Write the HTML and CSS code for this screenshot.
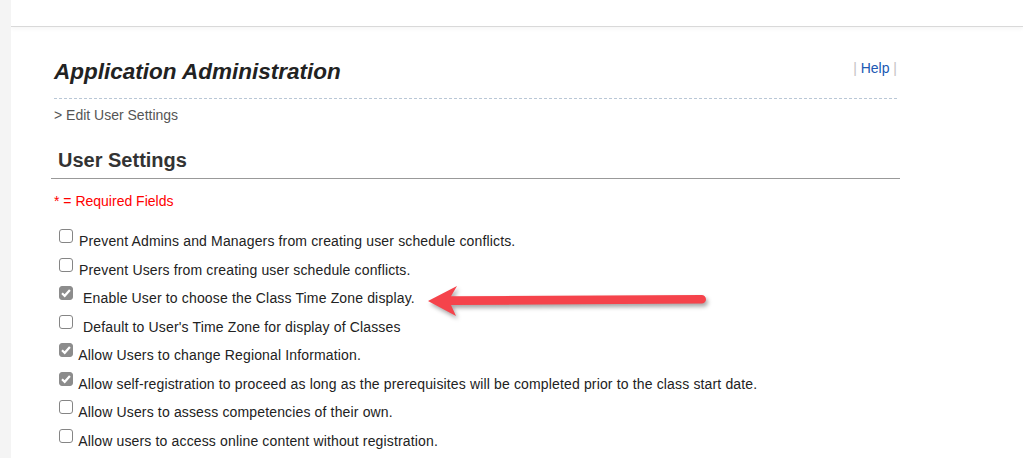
FILE: index.html
```html
<!DOCTYPE html>
<html lang="en">
<head>
  <meta charset="UTF-8" />
  <meta name="viewport" content="width=device-width, initial-scale=1.0" />
  <title>Application Administration - User Settings</title>
  <link rel="stylesheet" href="styles.css">
</head>
<body>
  <div class="page">
    <div class="topbar"></div>

    <div class="main">
      <div class="admin-head">
        <h1>Application Administration</h1>
        <div class="help"><span class="pipe">|</span> <a href="#">Help</a> <span class="pipe">|</span></div>
      </div>
      <div class="crumb">&gt; Edit User Settings</div>

      <h2 class="section-title">User Settings</h2>
      <div class="required">* = Required Fields</div>

      <div class="options">
        <div class="option"><input type="checkbox" /> Prevent Admins and Managers from creating user schedule conflicts.</div>
        <div class="option"><input type="checkbox" /> Prevent Users from creating user schedule conflicts.</div>
        <div class="option"><input type="checkbox" checked disabled /> &nbsp;Enable User to choose the Class Time Zone display.</div>
        <div class="option"><input type="checkbox" /> &nbsp;Default to User's Time Zone for display of Classes</div>
        <div class="option"><input type="checkbox" checked disabled /> Allow Users to change Regional Information.</div>
        <div class="option"><input type="checkbox" checked disabled /> Allow self-registration to proceed as long as the prerequisites will be completed prior to the class start date.</div>
        <div class="option"><input type="checkbox" /> Allow Users to assess competencies of their own.</div>
        <div class="option"><input type="checkbox" /> Allow users to access online content without registration.</div>
      </div>
    </div>

    <!-- annotation arrow drawn over the page -->
    <svg class="arrow" viewBox="0 0 295 45" width="295" height="45">
      <path d="M8,21 L37,6 L31,16.3 L281.7,15 A4.3,4.3 0 0 1 281.7,23.6 L31,25 L36,36 Z" fill="#f5434b" />
    </svg>
  </div>
</body>
</html>
```

FILE: styles.css
```css
html, body {
  margin: 0;
  padding: 0;
  background: #f4f4f4;
  font-family: "Liberation Sans", Arial, sans-serif;
  font-size: 14px;
  color: #222;
}
.page {
  position: relative;
  margin-left: 11px;
  min-height: 100vh;
  background: #fff;
  overflow: hidden;
}
.topbar {
  height: 26px;
  border-bottom: 1px solid #d9d9d9;
  box-shadow: 0 2px 4px rgba(0,0,0,0.04);
}
.main {
  margin-left: 40px;
  width: 849px;
}
.admin-head {
  display: flex;
  justify-content: space-between;
  align-items: flex-start;
  margin: 0 3px;
  padding-top: 31px;
  padding-bottom: 12px;
  border-bottom: 1px dashed #b9c7d6;
}
.admin-head h1 {
  margin: 0;
  font-size: 22.5px;
  line-height: 28px;
  font-style: italic;
  font-weight: bold;
  color: #222;
}
.help {
  margin-top: 2px;
  line-height: 16px;
  font-size: 14px;
}
.help a {
  color: #2059b3;
  text-decoration: none;
}
.help .pipe {
  color: #c4c4c4;
}
.crumb {
  margin-top: 8px;
  padding-left: 3px;
  line-height: 16px;
  color: #555;
}
.section-title {
  margin: 25px 0 0;
  padding: 0 0 6px 7px;
  font-size: 20px;
  line-height: 24px;
  color: #333;
  border-bottom: 1px solid #999;
}
.required {
  margin-top: 14px;
  padding-left: 3px;
  line-height: 16px;
  color: #f00;
}
.options {
  margin-top: 18px;
  padding-left: 4px;
}
.option {
  line-height: 28.5px;
  white-space: nowrap;
  letter-spacing: 0.15px;
}
.option input {
  -webkit-appearance: none;
  appearance: none;
  width: 14px;
  height: 14px;
  margin: 0 2px 3px 4px;
  border: 1px solid #858585;
  border-radius: 3px;
  background: #fff;
  box-sizing: border-box;
  vertical-align: baseline;
}
.option input:checked {
  border-color: #8c8c8c;
  background: #8c8c8c url("data:image/svg+xml,%3Csvg xmlns='http://www.w3.org/2000/svg' viewBox='0 0 14 14'%3E%3Cpath d='M3 7.2 L5.7 9.8 L10.9 3.9' fill='none' stroke='%23fff' stroke-width='2.2'/%3E%3C/svg%3E") center / 14px 14px no-repeat;
}
.arrow {
  position: absolute;
  left: 409px;
  top: 280px;
  overflow: visible;
  filter: drop-shadow(2px 3px 2px rgba(0,0,0,0.35));
}
```
